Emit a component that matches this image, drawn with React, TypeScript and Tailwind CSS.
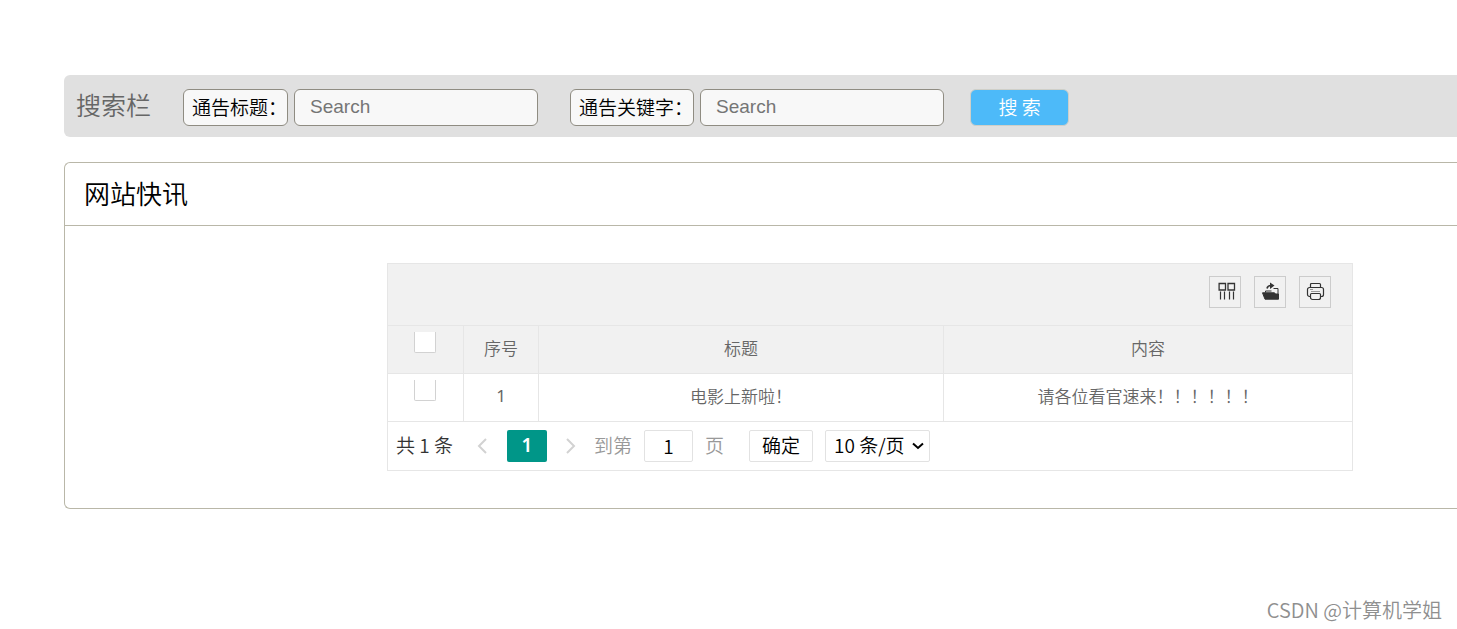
import React from "react";

type Row = { id: number; title: string; content: string };

const rows: Row[] = [{ id: 1, title: "电影上新啦！", content: "请各位看官速来！！！！！！" }];

function SearchField({ id, label }: { id: string; label: string }) {
  return (
    <div className="flex shrink-0 gap-1.5">
      <label
        htmlFor={id}
        className="flex h-[37px] items-center whitespace-nowrap rounded-md border border-[#8f8c82] bg-[#f8f8f8] pl-2 text-[19px] text-black"
      >
        {label}
      </label>
      <input
        id={id}
        type="text"
        placeholder="Search"
        className="h-[37px] w-[244px] rounded-md border border-[#8f8c82] bg-[#f8f8f8] px-[15px] font-['Liberation_Sans',sans-serif] text-[19px] font-normal placeholder:text-[#757575]"
      />
    </div>
  );
}

function ToolButton({ label, children }: { label: string; children: React.ReactNode }) {
  return (
    <button
      type="button"
      aria-label={label}
      className="flex size-8 items-center justify-center border border-[#cccccc] pb-0.5 text-[#333333]"
    >
      {children}
    </button>
  );
}

function ColumnsIcon() {
  return (
    <svg width="20" height="20" viewBox="0 0 20 20" fill="none" stroke="currentColor" className="ml-1">
      <path d="M2.100 2.500h6.400v6.500h-6.400zM11 2.500h6.500v6.500h-6.500z" strokeWidth="1.300" />
      <path d="M3.500 10.500v8M7.500 10.500v8M12.500 10.500v8M16.500 10.500v8" strokeWidth="1.200" />
    </svg>
  );
}

function ExportIcon() {
  return (
    <svg width="20" height="20" viewBox="0 0 20 20" fill="none" stroke="currentColor" className="ml-0.5">
      <path d="M1.500 11.800h12l1 1.200h3v5.200H4z" fill="currentColor" />
      <path d="M4.500 11.500v-1.500h6M12.500 7.500h4.500V15" />
      <path d="M6 7.500C6.500 5 8 4.500 10 4.500" strokeWidth="1.600" />
      <path d="M9 1.500l4.500 3-4.500 3.500z" fill="currentColor" stroke="none" />
    </svg>
  );
}

function PrintIcon() {
  return (
    <svg width="20" height="20" viewBox="0 0 20 20" fill="none" stroke="currentColor" strokeWidth="1.200">
      <path d="M5.500 6V3.500a1 1 0 0 1 1-1h8a1 1 0 0 1 1 1V6" />
      <path d="M5.500 15.500h-1a2 2 0 0 1-2-2v-5a2 2 0 0 1 2-2h12a2 2 0 0 1 2 2v5a2 2 0 0 1-2 2h-1" />
      <path d="M6.500 12.500h8a1 1 0 0 1 1 1v3a2 2 0 0 1-2 2h-6a2 2 0 0 1-2-2v-3a1 1 0 0 1 1-1z" />
      <path d="M5 8.500h3M6 10.500h9" stroke="#999999" />
    </svg>
  );
}

function Chevron({ d }: { d: string }) {
  return (
    <svg width="10" height="16" viewBox="0 0 10 16" fill="none" stroke="#d2d2d2" strokeWidth="2">
      <path d={d} />
    </svg>
  );
}

function Check({ label }: { label: string }) {
  return (
    <input
      type="checkbox"
      aria-label={label}
      className="block h-[21px] w-[22px] appearance-none rounded-b-xs border border-t-0 border-[#d2d2d2] bg-white checked:bg-[#009688]"
    />
  );
}

export default function App() {
  return (
    <div className="relative min-h-screen overflow-hidden bg-white pt-[75px] pl-16 font-['Noto_Sans_CJK_SC',sans-serif] font-[350]">
      <form
        onSubmit={(e) => e.preventDefault()}
        className="flex h-[62px] items-center rounded-l-md bg-[#e0e0e0] pt-0.5 pl-3"
      >
        <h2 className="w-[107px] shrink-0 pb-1 text-[25px] text-[#666666]">搜索栏</h2>
        <div className="flex items-center gap-8">
          <SearchField id="notice-title" label="通告标题：" />
          <SearchField id="notice-keyword" label="通告关键字：" />
        </div>
        <button
          type="submit"
          className="ml-[26px] h-[37px] w-[99px] shrink-0 rounded-md border border-[#cfcfc8] bg-[#4dbaf9] text-[19px] text-white"
        >
          搜 索
        </button>
      </form>

      <section className="mt-[25px] rounded-l-md border border-r-0 border-[#b9b7a8] pb-[37px]">
        <h1 className="flex h-[63px] items-center border-b border-[#b9b7a8] pb-1 pl-[19px] text-[26px] text-black">
          网站快讯
        </h1>
        <div className="mt-[37px] mr-[104px] ml-[322px] border border-[#e6e6e6]">
          <div className="flex h-[62px] justify-end gap-[13px] border-b border-[#e6e6e6] bg-[#f1f1f1] pt-3 pr-[21px]">
            <ToolButton label="筛选列">
              <ColumnsIcon />
            </ToolButton>
            <ToolButton label="导出">
              <ExportIcon />
            </ToolButton>
            <ToolButton label="打印">
              <PrintIcon />
            </ToolButton>
          </div>
          <table className="w-full table-fixed border-separate border-spacing-0 text-center text-[17px] text-[#666666]">
            <colgroup>
              <col className="w-[76px]" />
              <col className="w-[75px]" />
              <col className="w-[405px]" />
              <col />
            </colgroup>
            <thead>
              <tr className="h-12 bg-[#f1f1f1]">
                <th className="border-r border-b border-[#e6e6e6] pt-1.5 pl-[26px] align-top">
                  <Check label="全选" />
                </th>
                <th className="border-r border-b border-[#e6e6e6] pb-[3px] font-[350]">序号</th>
                <th className="border-r border-b border-[#e6e6e6] pb-[3px] font-[350]">标题</th>
                <th className="border-b border-[#e6e6e6] pb-[3px] font-[350]">内容</th>
              </tr>
            </thead>
            <tbody>
              {rows.map((row) => (
                <tr key={row.id} className="h-12">
                  <td className="border-r border-b border-[#e6e6e6] pt-1.5 pl-[26px] align-top">
                    <Check label={row.title} />
                  </td>
                  <td className="border-r border-b border-[#e6e6e6] pb-[3px] font-['Noto_Sans',sans-serif] font-normal">
                    {row.id}
                  </td>
                  <td className="border-r border-b border-[#e6e6e6] pb-[3px]">{row.title}</td>
                  <td className="border-b border-[#e6e6e6] pb-[3px]">{row.content}</td>
                </tr>
              ))}
            </tbody>
          </table>
          <div className="flex h-12 items-center pl-2 font-['Noto_Sans_CJK_SC',sans-serif] text-[19px] text-[#333333]">
            <span className="w-[61px] whitespace-nowrap pb-0.5">共 1 条</span>
            <button type="button" aria-label="上一页" className="flex w-[50px] justify-center">
              <Chevron d="M9 1 2 8l7 7" />
            </button>
            <button
              type="button"
              aria-current="page"
              className="h-8 w-10 rounded-xs bg-[#009688] pb-0.5 font-['Noto_Sans',sans-serif] font-semibold text-white"
            >
              1
            </button>
            <button type="button" aria-label="下一页" className="flex w-[47px] justify-center">
              <Chevron d="m1 1 7 7-7 7" />
            </button>
            <label htmlFor="page-number" className="pb-0.5 text-[#999999]">
              到第
            </label>
            <input
              id="page-number"
              type="text"
              defaultValue="1"
              className="mx-3 h-8 w-[49px] rounded-xs border border-[#e2e2e2] bg-white pb-0.5 text-center text-black"
            />
            <span className="pb-0.5 text-[#999999]">页</span>
            <button
              type="button"
              className="ml-[25px] h-8 w-16 rounded-xs border border-[#e2e2e2] bg-white pb-0.5 text-black"
            >
              确定
            </button>
            <div className="relative ml-3">
              <select
                aria-label="每页条数"
                className="block h-8 w-[105px] appearance-none rounded-xs border border-[#e2e2e2] bg-white pb-0.5 pl-2 text-black"
              >
                <option>10 条/页</option>
                <option>20 条/页</option>
                <option>30 条/页</option>
              </select>
              <svg
                width="12"
                height="8"
                viewBox="0 0 12 8"
                fill="none"
                stroke="black"
                strokeWidth="2"
                className="pointer-events-none absolute top-3 right-1.5"
              >
                <path d="m1 1.500 5 4.500 5-4.500" />
              </svg>
            </div>
          </div>
        </div>
      </section>

      <p className="absolute right-[15px] bottom-1 text-[20px] text-[#8f8f8f]">CSDN @计算机学姐</p>
    </div>
  );
}
